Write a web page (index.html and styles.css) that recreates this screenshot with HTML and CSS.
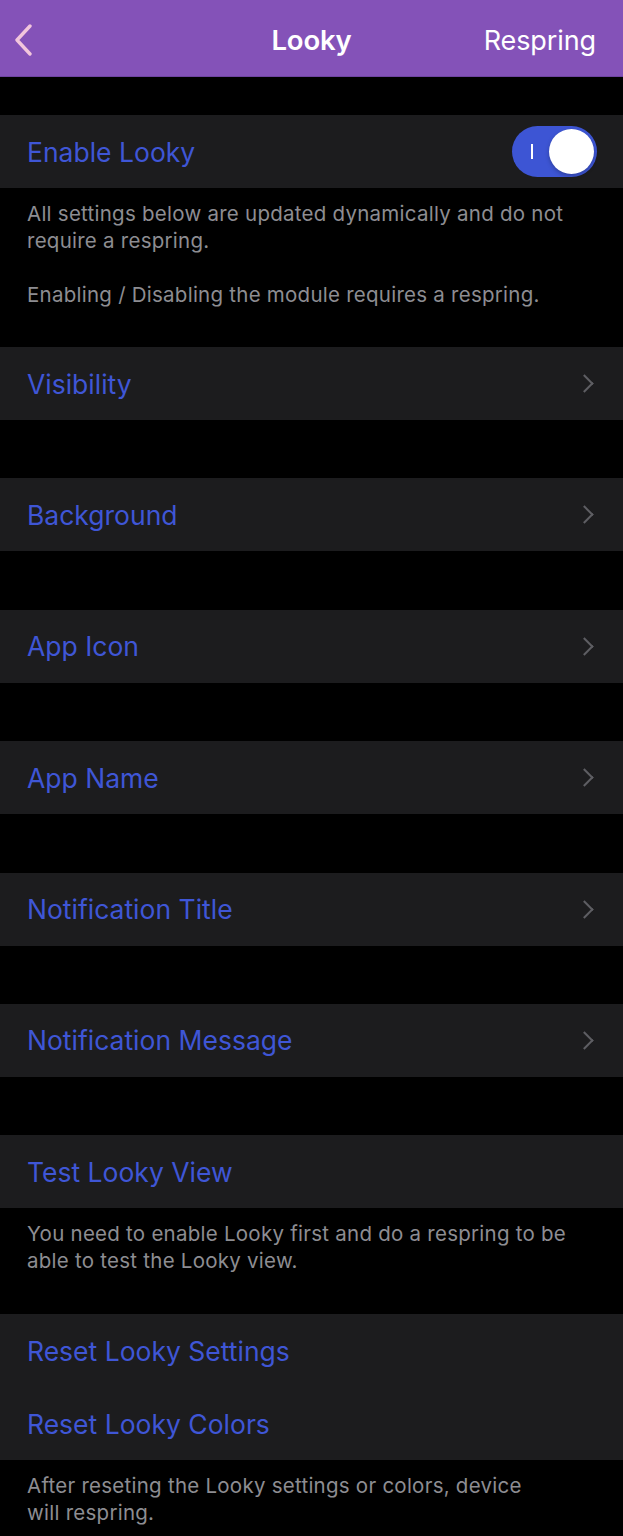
FILE: index.html
```html
<!DOCTYPE html>
<html lang="en">
<head>
    <meta charset="UTF-8">
    <meta name="viewport" content="width=device-width, initial-scale=1.0">
    <title>Looky</title>
    <link rel="stylesheet" href="styles.css">
</head>
<body>
    <div class="navbar">
        <a class="nav-back" href="#">
            <svg width="22" height="32" viewBox="0 0 22 32"><path d="M18 2 L5 16 L18 30" fill="none" stroke="#f2c6dc" stroke-width="3.4" stroke-linecap="round" stroke-linejoin="round"/></svg>
        </a>
        <div class="nav-title">Looky</div>
        <a class="nav-action" href="#">Respring</a>
    </div>

    <div class="spacer-top"></div>

    <div class="group">
        <div class="cell">
            <span class="cell-label">Enable Looky</span>
            <div class="switch on"><span class="switch-mark"></span><span class="switch-knob"></span></div>
        </div>
    </div>
    <p class="footer first">All settings below are updated dynamically and do not require a respring.<br><br>Enabling / Disabling the module requires a respring.</p>

    <div class="group">
        <div class="cell"><span class="cell-label">Visibility</span><span class="chevron"></span></div>
    </div>
    <div class="gap"></div>
    <div class="group">
        <div class="cell"><span class="cell-label">Background</span><span class="chevron"></span></div>
    </div>
    <div class="gap"></div>
    <div class="group">
        <div class="cell"><span class="cell-label">App Icon</span><span class="chevron"></span></div>
    </div>
    <div class="gap"></div>
    <div class="group">
        <div class="cell"><span class="cell-label">App Name</span><span class="chevron"></span></div>
    </div>
    <div class="gap"></div>
    <div class="group">
        <div class="cell"><span class="cell-label">Notification Title</span><span class="chevron"></span></div>
    </div>
    <div class="gap"></div>
    <div class="group">
        <div class="cell"><span class="cell-label">Notification Message</span><span class="chevron"></span></div>
    </div>
    <div class="gap"></div>
    <div class="group">
        <div class="cell"><span class="cell-label">Test Looky View</span></div>
    </div>
    <p class="footer short">You need to enable Looky first and do a respring to be able to test the Looky view.</p>

    <div class="group">
        <div class="cell"><span class="cell-label">Reset Looky Settings</span></div>
        <div class="cell"><span class="cell-label">Reset Looky Colors</span></div>
    </div>
    <p class="footer last">After reseting the Looky settings or colors, device<br>will respring.</p>
</body>
</html>
```

FILE: styles.css
```css
body {
    margin: 0;
    background: #000;
    font-family: Inter, "Noto Sans", sans-serif;
    color: #fff;
}
.navbar {
    height: 77px;
    box-sizing: border-box;
    padding: 4px 27px 0 12px;
    background: #8452b8;
    border-bottom: 1px solid #6e44a0;
    display: flex;
    align-items: center;
    justify-content: space-between;
    position: relative;
}
.nav-back {
    display: flex;
    align-items: center;
    height: 32px;
}
.nav-title {
    position: absolute;
    left: 0;
    right: 0;
    text-align: center;
    font-size: 27.5px;
    font-weight: 600;
    letter-spacing: -0.2px;
    pointer-events: none;
}
.nav-action {
    color: #fff;
    text-decoration: none;
    font-size: 27px;
    letter-spacing: -0.1px;
}
.spacer-top {
    height: 38px;
}
.gap {
    height: 58.4px;
}
.group {
    background: #1c1c1e;
}
.cell {
    height: 73px;
    display: flex;
    align-items: center;
    justify-content: space-between;
    padding: 0 27px;
}
.cell-label {
    color: #3f56d6;
    font-size: 26.5px;
    letter-spacing: 0;
}
.chevron {
    width: 11px;
    height: 11px;
    border-top: 2.8px solid #5e5e63;
    border-right: 2.8px solid #5e5e63;
    transform: rotate(45deg);
    margin-right: 5px;
}
.switch {
    width: 85px;
    height: 51px;
    border-radius: 26px;
    background: #3d55d4;
    position: relative;
    margin-right: -1px;
}
.switch-knob {
    position: absolute;
    top: 3px;
    right: 3px;
    width: 45px;
    height: 45px;
    border-radius: 50%;
    background: #fff;
    box-shadow: 0 2px 4px rgba(0,0,0,0.25);
}
.switch-mark {
    position: absolute;
    left: 19px;
    top: 18px;
    width: 2px;
    height: 15px;
    background: #fff;
}
.footer {
    margin: 0;
    padding: 12px 27px 40px;
    color: #8d8d92;
    font-size: 20.5px;
    line-height: 27px;
    letter-spacing: 0.25px;
}
.footer.first {
    padding-bottom: 39px;
}
.footer.last {
    padding-bottom: 20px;
}
```
